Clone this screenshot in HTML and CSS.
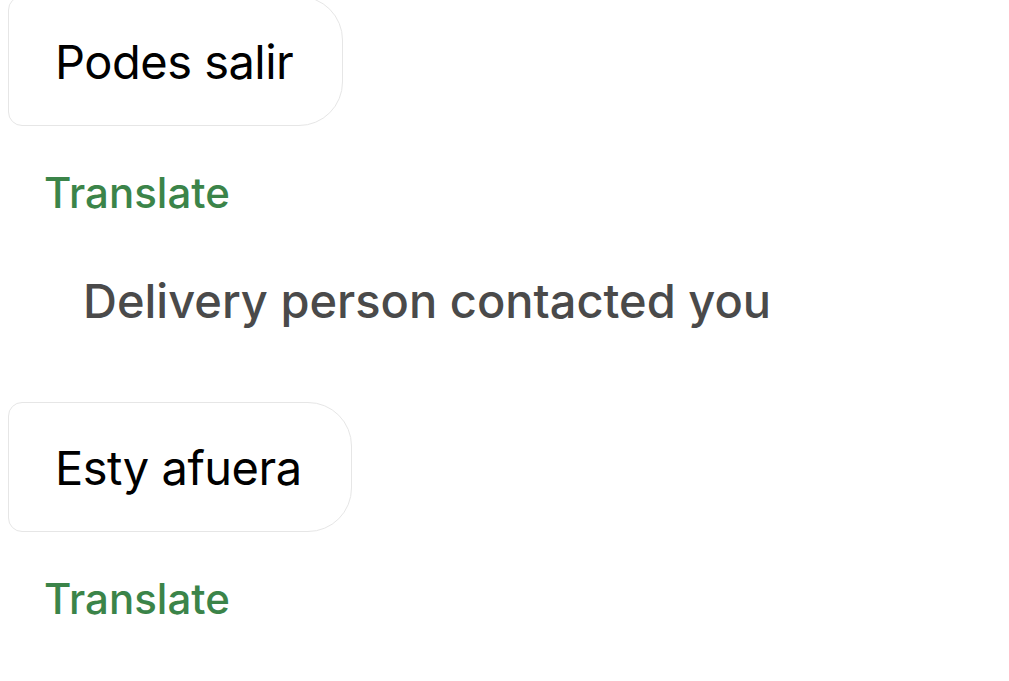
FILE: index.html
```html
<!DOCTYPE html>
<html>
<head>
<meta charset="utf-8">
<link rel="stylesheet" href="styles.css">
</head>
<body>
<div class="chat">
  <div class="bubble bubble-first">Podes salir</div>
  <div class="translate">Translate</div>
  <div class="system">Delivery person contacted you</div>
  <div class="bubble">Esty afuera</div>
  <div class="translate">Translate</div>
</div>
</body>
</html>
```

FILE: styles.css
```css
html, body {
  margin: 0;
  padding: 0;
  background: #ffffff;
}
body {
  width: 1009px;
  height: 681px;
  overflow: hidden;
  font-family: Inter, "Liberation Sans", sans-serif;
}
.chat {
  display: flex;
  flex-direction: column;
  align-items: flex-start;
  padding-left: 8px;
}
.bubble {
  box-sizing: border-box;
  height: 130px;
  display: flex;
  align-items: center;
  padding: 0 49px 0 46px;
  border: 1px solid #e6e6e6;
  border-radius: 14px 44px 44px 14px;
  font-size: 47px;
  color: #000000;
  letter-spacing: -0.5px;
}
.bubble-first {
  margin-top: -4px;
}
.translate {
  margin-left: 36px;
  margin-top: 46px;
  line-height: 42px;
  font-size: 42px;
  font-weight: 500;
  color: #3b8449;
}
.system {
  margin-left: 75px;
  margin-top: 62px;
  line-height: 50px;
  font-size: 47px;
  font-weight: 500;
  color: #4a4a4a;
  margin-bottom: 76px;
}
```
